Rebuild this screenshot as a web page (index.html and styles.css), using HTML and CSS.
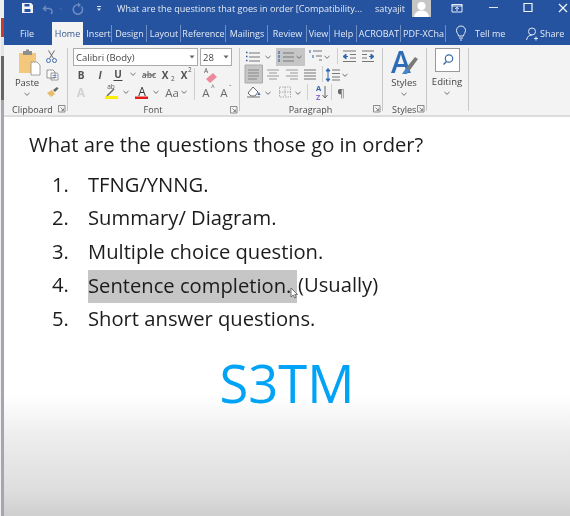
FILE: index.html
```html
<!DOCTYPE html>
<html lang="en">
<head>
<meta charset="utf-8">
<title>What are the questions those go in order?</title>
<link rel="stylesheet" href="styles.css">
</head>
<body>
<svg class="sprite" aria-hidden="true">
  <symbol id="chev" viewBox="-4 -3 8 6" width="8" height="6"><path d="M-2.500-1 0 1.300 2.500-1" fill="none" stroke="#707070" stroke-width="1"/></symbol>
  <symbol id="launch" viewBox="0 0 8 8" width="8" height="8"><path d="M.5.5h6.500v6.500h-6.500zM2.500 2.500l3 3M3.500 5.500h2v-2" fill="none" stroke="#808080" stroke-width=".9"/></symbol>
</svg>
<div class="screen">
  <div class="edge"></div>
  <div class="window">
    <header class="titlebar">
      <svg class="qat" viewBox="4 0 113 22">
        <path d="M22 3h9l2 2v8H22z" fill="#f1f5fb"/><path d="M24.500 4h5v2.500h-5zM24.500 9h6v3h-6z" fill="#2553a0"/>
        <path d="M46 6l-2.500 2.500L46 11M44 8.500h5.500a3.200 3.200 0 0 1 1.500 5.500" fill="none" stroke="#6a8ac0" stroke-width="1.600"/>
        <path d="M59.500 8l2 1.500" stroke="#5478b4" stroke-width="1"/>
        <path d="M81.500 6.500a4.700 4.700 0 1 1-3.500-1.700" fill="none" stroke="#6a8ac0" stroke-width="1.600"/><path d="M78 2.500v5l3-2.500z" fill="#6a8ac0"/>
        <path d="M97 6.500h4" stroke="#dfe7f3"/><path d="M97 8.500h4l-2 2.500z" fill="#dfe7f3"/>
      </svg>
      <span class="doc-title">What are the questions that goes in order [Compatibility...</span>
      <span class="user">satyajit</span>
      <svg class="avatar" viewBox="0 0 19 17"><rect width="19" height="17" fill="#c6c6c6"/><circle cx="9.500" cy="6" r="4" fill="#fff"/><path d="M2 17c.5-5 4-6.500 7.500-6.500S16.500 12 17 17z" fill="#fff"/></svg>
      <svg class="winctl" viewBox="431 0 139 22">
        <path d="M452 4.500h10v7.500h-10z" fill="none" stroke="#e8eef7"/><path d="M452 4.500h10v1.500h-10zM457 11V7.500M455.200 9l1.800-1.800L458.800 9" fill="none" stroke="#e8eef7"/>
        <path d="M489 7.500h9" stroke="#dfe7f3"/>
        <path d="M524 3.500h8v8h-8z" fill="none" stroke="#f1f5fb" stroke-width="1.200"/>
        <path d="M559 4l8 8M567 4l-8 8" stroke="#f1f5fb" stroke-width="1.200"/>
      </svg>
    </header>
    <nav class="tabs">
      <span class="tab file">File</span>
      <span class="tab home">Home</span>
      <span class="tab sep w-insert">Insert</span>
      <span class="tab sep w-design">Design</span>
      <span class="tab sep w-layout">Layout</span>
      <span class="tab sep w-ref">Reference</span>
      <span class="tab sep w-mail">Mailings</span>
      <span class="tab sep w-review">Review</span>
      <span class="tab sep w-view">View</span>
      <span class="tab sep w-help">Help</span>
      <span class="tab sep w-acro">ACROBAT</span>
      <span class="tab sep w-pdf">PDF-XCha</span>
      <svg class="bulb" viewBox="0 0 12 16"><path d="M3.500 11c0-2-2-3-2-5.500a4.500 4.500 0 0 1 9 0c0 2.500-2 3.500-2 5.500zM4 13h4M5 15h2" fill="none" stroke="#e8eef7" stroke-width="1"/></svg>
      <span class="tell">Tell me</span>
      <svg class="share-ic" viewBox="0 0 12 14"><circle cx="6" cy="4.500" r="3.500" fill="none" stroke="#dfe7f3"/><path d="M.5 13c.5-3 2.500-5 5.500-5M8 11.500h4M10 9.500v4" fill="none" stroke="#dfe7f3"/></svg>
      <span class="share">Share</span>
    </nav>
    <section class="ribbon">
      <div class="group g-clip">
        <svg class="art art-clip" viewBox="4 46 63 52">
          <path d="M19 53h17v20H19z" fill="#f3c77c"/><path d="M23 51h9v4h-9z" fill="#8f8f8f"/><path d="M26 49.500h3v2h-3z" fill="#8f8f8f"/>
          <path d="M31 62h6l3 3v10h-9z" fill="#fff" stroke="#8a8a8a" stroke-width=".8"/>
          <text class="t" x="27" y="85.500" text-anchor="middle">Paste</text>
          <use href="#chev" x="23" y="91"/>
          <circle cx="48.500" cy="60.500" r="2" fill="none" stroke="#3f6fb0"/><circle cx="54.500" cy="60.500" r="2" fill="none" stroke="#3f6fb0"/><path d="M49.500 58.500l5-8M53.500 58.500l-5-8" stroke="#666" stroke-width="1"/>
          <path d="M47 70h6l2 2v6h-8zM51 73h6l1 1v6h-7z" fill="#fbfbfb" stroke="#808080" stroke-width=".8"/><path d="M52.500 75.500h4M52.500 77.500h4" stroke="#3f6fb0" stroke-width=".7"/>
          <path d="M47 93l5-3 3 4-4 3z" fill="#e9bb6c"/><path d="M53 90l4-3 1.500 1.500-3.500 3.500z" fill="#666"/>
        </svg>
        <div class="glabel"><span class="lbl">Clipboard</span><svg class="launch" viewBox="0 0 8 8"><use href="#launch"/></svg></div>
      </div>
      <div class="group g-font">
        <div class="combos">
          <div class="combo c-name"><span>Calibri (Body)</span><svg class="caret" viewBox="-4 -3 8 6"><path d="M-2.500-1.500h5L0 1.500z" fill="#666"/></svg></div>
          <div class="combo c-size"><span>28</span><svg class="caret" viewBox="-4 -3 8 6"><path d="M-2.500-1.500h5L0 1.500z" fill="#666"/></svg></div>
        </div>
        <svg class="art art-font" viewBox="68 66 171 36">
          <text class="b" x="81" y="79" text-anchor="middle">B</text>
          <text class="b i" x="100" y="79" text-anchor="middle">I</text>
          <text class="b" x="118" y="78" text-anchor="middle">U</text><path d="M113.500 80.500h9" stroke="#444"/>
          <use href="#chev" x="129" y="71"/>
          <text class="s" x="149" y="78" text-anchor="middle">abc</text><path d="M143 75h12" stroke="#555" stroke-width=".8"/>
          <text class="b" x="165" y="79" text-anchor="middle">X</text><text class="xs" x="171" y="81">2</text>
          <text class="b" x="184" y="79" text-anchor="middle">X</text><text class="xs" x="188" y="72">2</text>
          <path d="M194.500 68v32" stroke="#d0d0d0"/>
          <text class="xs" x="206" y="73" text-anchor="middle">A</text>
          <path d="M206 79l7-6 4 4-7 6z" fill="#ec8a9c"/>
          <text class="big grey" x="81" y="97" text-anchor="middle">A</text>
          <text class="xs" x="111" y="89" text-anchor="middle">ab</text><path d="M107 96l7-7" stroke="#666" stroke-width="1.500"/><path d="M105 96h13v3h-13z" fill="#ffee00"/>
          <use href="#chev" x="122" y="89"/>
          <text class="big" x="142" y="96" text-anchor="middle">A</text><path d="M135 96.500h13v2.500h-13z" fill="#e31c1c"/>
          <use href="#chev" x="152" y="89"/>
          <text class="big l" x="172" y="97" text-anchor="middle">Aa</text>
          <use href="#chev" x="180" y="89"/>
          <text class="big l" x="206" y="97" text-anchor="middle">A</text><text class="xs" x="211" y="90">^</text>
          <text class="big l" x="224" y="97" text-anchor="middle">A</text><text class="xs" x="229" y="90">ˇ</text>
        </svg>
        <div class="glabel center"><span class="lbl">Font</span><svg class="launch" viewBox="0 0 8 8"><use href="#launch"/></svg></div>
      </div>
      <div class="group g-para">
        <svg class="art art-para" viewBox="240 46 142 56">
          <path d="M276 48h29v18h-29zM245 65h17.500v18H245z" fill="#c6c6c6"/><path d="M245 65h17.500v18H245z" fill="none" stroke="#aaa"/>
          <path d="M249 53h11M249 57h11M249 61h11" stroke="#777" stroke-width="1.200"/><path d="M246 52.500h1.500M246 56.500h1.500M246 60.500h1.500" stroke="#2f5f9f" stroke-width="1.500"/>
          <use href="#chev" x="264" y="54"/>
          <path d="M283 53h11M283 57h11M283 61h11" stroke="#777" stroke-width="1.200"/><path d="M279 51v3M279 55v3M279 59v3" stroke="#3a6aa8" stroke-width="1.200"/>
          <use href="#chev" x="295" y="54"/>
          <path d="M313 51h9M316 56h6M319 60h3" stroke="#777" stroke-width="1.100"/><path d="M310 50v3M313 55v3" stroke="#3a6aa8" stroke-width="1.100"/>
          <use href="#chev" x="323" y="54"/>
          <path d="M337.500 48v16" stroke="#d0d0d0"/>
          <path d="M343 51h13M350 54.500h6M350 58h6M343 61.500h13" stroke="#777" stroke-width="1.100"/><path d="M348 56.500h-4M346 54l-3 2.500 3 2.500z" fill="#2f66ad" stroke="#2f66ad"/>
          <path d="M362 51h12M362 54.500h5M362 58h5M362 61.500h12" stroke="#777" stroke-width="1.100"/><path d="M369 56.500h3M371 54l3 2.500-3 2.500z" fill="#2f66ad" stroke="#2f66ad"/>
          <path d="M248 70h11M248 73h11M248 76h11M248 79h9" stroke="#888" stroke-width="1.100"/>
          <path d="M267 70h12M269 73h8M267 76h12M269 79h8" stroke="#999" stroke-width="1.100"/>
          <path d="M286 70h12M290 73h8M286 76h12M290 79h8" stroke="#999" stroke-width="1.100"/>
          <path d="M304 70h12M304 73h12M304 76h12M304 79h12" stroke="#777" stroke-width="1.100"/>
          <path d="M322.500 66v16" stroke="#d0d0d0"/>
          <path d="M328 70v10M328 68.500l-2 2.500h4zM328 81.500l-2-2.500h4z" fill="#2f66ad" stroke="#2f66ad" stroke-width="1"/><path d="M332 70h8M332 73.500h8M332 77h8M332 80h8" stroke="#777" stroke-width="1.100"/>
          <use href="#chev" x="341" y="72"/>
          <path d="M248 93l5-6 5 5-3 4h-4z" fill="#fff" stroke="#666"/><path d="M259 92l1.500 3h-3z" fill="#2f66ad"/><path d="M247 97h13" stroke="#888" stroke-width="1.200"/>
          <use href="#chev" x="264" y="90"/>
          <path d="M279.500 87h11v10h-11zM285 87v10M279.500 92h11" fill="none" stroke="#aaa" stroke-dasharray="1.500 1"/>
          <use href="#chev" x="294" y="90"/>
          <path d="M307.500 84v16" stroke="#d0d0d0"/>
          <text class="blue" x="316" y="91">A</text><text class="purple" x="316" y="100">Z</text><path d="M325 86v12M322.500 95l2.500 3 2.500-3" fill="none" stroke="#666"/>
          <path d="M331.500 84v16" stroke="#d0d0d0"/>
          <text class="big l" x="341" y="97" text-anchor="middle">¶</text>
        </svg>
        <div class="glabel center"><span class="lbl">Paragraph</span><svg class="launch" viewBox="0 0 8 8"><use href="#launch"/></svg></div>
      </div>
      <div class="group g-styles">
        <svg class="art art-big" viewBox="383 46 43 52">
          <text class="huge" x="401" y="73" text-anchor="middle">A</text>
          <path d="M406 68l9-11 3 2-8 11z" fill="#7a7a7a"/><path d="M402 74l4-6 4 2-3 4z" fill="#4a86c5"/>
          <text class="t" x="404" y="85.500" text-anchor="middle">Styles</text>
          <use href="#chev" x="400" y="91"/>
        </svg>
        <div class="glabel"><span class="lbl">Styles</span><svg class="launch" viewBox="0 0 8 8"><use href="#launch"/></svg></div>
      </div>
      <div class="group g-edit">
        <svg class="art art-big" viewBox="427 46 41 52">
          <rect x="435.500" y="48.500" width="24" height="23" fill="#fff" stroke="#9a9a9a"/>
          <circle cx="449" cy="58.500" r="3.700" fill="none" stroke="#3a6aa8" stroke-width="1.200"/><path d="M446.500 61.500l-3 3" stroke="#3a6aa8" stroke-width="1.500"/>
          <text class="t" x="447" y="85" text-anchor="middle">Editing</text>
          <use href="#chev" x="443" y="90"/>
        </svg>
      </div>
    </section>
    <main class="doc">
      <h1 class="heading">What are the questions those go in order?</h1>
      <ol class="list">
        <li class="item"><span class="num">1.</span><span>TFNG/YNNG.</span></li>
        <li class="item"><span class="num">2.</span><span>Summary/ Diagram.</span></li>
        <li class="item"><span class="num">3.</span><span>Multiple choice question.</span></li>
        <li class="item"><span class="num">4.</span><span class="mark">Sentence completion.<svg class="cursor" viewBox="0 0 8 12"><path d="M1 1v9l2.200-2 1.500 3 1.500-.7-1.500-2.800H7.500z" fill="#fff" stroke="#555" stroke-width=".8"/></svg></span><span class="usually">(Usually)</span></li>
        <li class="item"><span class="num">5.</span><span>Short answer questions.</span></li>
      </ol>
      <div class="brand">S3TM</div>
    </main>
  </div>
</div>
</body>
</html>
```

FILE: styles.css
```css
* { box-sizing: border-box; }
html, body { margin: 0; padding: 0; }
body { width: 570px; height: 516px; overflow: hidden; font-family: "Open Sans", "Noto Sans", sans-serif; background: #fff; }
.sprite { display: none; }
.screen { display: flex; width: 570px; height: 516px; }
.edge { width: 4px; flex: none; border-left: 1px solid #f0f0f0;
  background: linear-gradient(to bottom, #efefef 0 18px, #c33d2b 18px 37px, #e4e4e4 37px 56px, #666 56px 100px, #a3a8b0 100px); }
.window { flex: 1; display: flex; flex-direction: column; min-width: 0; filter: blur(.35px); }

.titlebar { height: 22px; display: flex; align-items: flex-start; background: #2553a0; color: #e3eaf5; font-size: 9.100px; flex: none; }
.qat { width: 113px; height: 22px; flex: none; }
.doc-title { width: 258px; flex: none; line-height: 17px; white-space: nowrap; overflow: hidden; }
.user { width: 37px; flex: none; line-height: 17px; }
.avatar { width: 19px; height: 17px; flex: none; }
.winctl { width: 139px; height: 22px; flex: none; }

.tabs { height: 23px; display: flex; align-items: stretch; background: #2553a0; color: #e3eaf5; font-size: 9px; flex: none; }
.tab { display: flex; align-items: center; justify-content: center; white-space: nowrap; overflow: hidden; flex: none; }
.sep { position: relative; }
.sep::after { content: ""; position: absolute; right: 0; top: 3px; bottom: 3px; width: 1px; background: #6f8fc4; }
.file { width: 48px; padding-right: 2px; }
.home { width: 31px; background: #f3f3f3; color: #35578f; }
.w-insert { width: 29px; padding-left: 2px; }
.w-design { width: 35px; }
.w-layout { width: 34px; }
.w-ref { width: 45px; }
.w-mail { width: 42px; }
.w-review { width: 39px; }
.w-view { width: 23px; }
.w-help { width: 27px; }
.w-acro { width: 44px; }
.w-pdf { width: 45px; }
.bulb { width: 12px; height: 16px; flex: none; margin: 3px 0 0 9px; }
.tell { margin-left: 8px; width: 51px; flex: none; line-height: 23px; }
.share-ic { width: 12px; height: 14px; flex: none; margin: 5px 0 0 0; }
.share { margin-left: 2px; line-height: 24px; flex: none; }

.ribbon { height: 72px; display: flex; background: #f3f3f3; border-bottom: 2px solid #dcdcdc; flex: none; }
.group { display: flex; flex-direction: column; flex: none; height: 70px; position: relative; }
.group::after { content: ""; position: absolute; right: 0; top: 3px; bottom: 4px; width: 1px; background: #c8c8c8; }
.g-clip { width: 64px; }
.g-font { width: 172px; }
.g-para { width: 143px; }
.g-styles { width: 44px; }
.g-edit { width: 42px; }
.art { display: block; flex: none; overflow: visible; }
.art-clip { width: 63px; height: 52px; margin-top: 1px; }
.art-font { width: 171px; height: 36px; }
.art-para { width: 142px; height: 56px; margin-top: 1px; margin-bottom: -4px; }
.art-big { width: 43px; height: 52px; margin-top: 1px; }
.g-edit .art-big { width: 41px; }
.combos { display: flex; gap: 2px; padding: 3px 0 0 5px; height: 21px; flex: none; }
.combo { height: 18px; background: #fff; border: 1px solid #ababab; display: flex; align-items: center; justify-content: space-between; font-size: 9.500px; color: #444; padding: 0 1px 0 2px; }
.c-name { width: 125px; }
.c-size { width: 32px; }
.caret { width: 8px; height: 6px; }
.glabel { display: flex; align-items: center; justify-content: space-between; font-size: 9px; color: #4a4a4a; margin-top: auto; height: 14px; padding: 0 2px 0 8px; transform: translateY(1px); }
.glabel.center { justify-content: center; position: relative; padding-left: 0; }
.glabel.center .launch { position: absolute; right: 2px; top: 3px; }
.g-styles .glabel { padding-left: 9px; padding-right: 2px; }
.lbl { white-space: nowrap; }
.launch { width: 8px; height: 8px; flex: none; }

.t { font-size: 9.500px; fill: #444; }
.b { font-size: 10px; font-weight: 700; fill: #505050; }
.i { font-style: italic; }
.s { font-size: 8.500px; fill: #666; font-weight: 600; }
.xs { font-size: 6.500px; fill: #555; }
.big { font-size: 12px; fill: #333; }
.big.l { fill: #6a6a6a; font-size: 11.500px; }
.grey { fill: #d2d2d2; font-weight: 700; }
.blue { fill: #2f66ad; font-size: 7.500px; font-weight: 700; }
.purple { fill: #8a6fc4; font-size: 7.500px; font-weight: 700; }
.huge { font-size: 30px; font-weight: 600; fill: #2e6cb8; }

.doc { flex: 1; padding: 10px 0 0 25px; color: #1c1c1c; font-size: 20.200px; min-height: 0;
  background: linear-gradient(to bottom, #fff 0, #fff 278px, #ececec 323px, #dedede 373px, #cfcfcf 399px); }
.heading { margin: 0 0 7px; font-size: inherit; font-weight: 400; line-height: 34px; white-space: nowrap; }
.list { list-style: none; margin: 0; padding: 0 0 0 23px; }
.item { display: flex; height: 33.400px; line-height: 33.400px; white-space: nowrap; }
.num { width: 36px; flex: none; }
.mark { background: #c6c6c6; position: relative; display: block; width: 209px; margin-top: 2px; height: 33px; line-height: 30px; }
.usually { margin-left: 1px; }
.cursor { position: absolute; right: -1px; top: 17px; width: 8px; height: 12px; }
.brand { margin-top: 20px; text-align: center; color: #00a3f5; font-size: 52.500px; font-weight: 500; line-height: 56px; padding-right: 25px; }
```
